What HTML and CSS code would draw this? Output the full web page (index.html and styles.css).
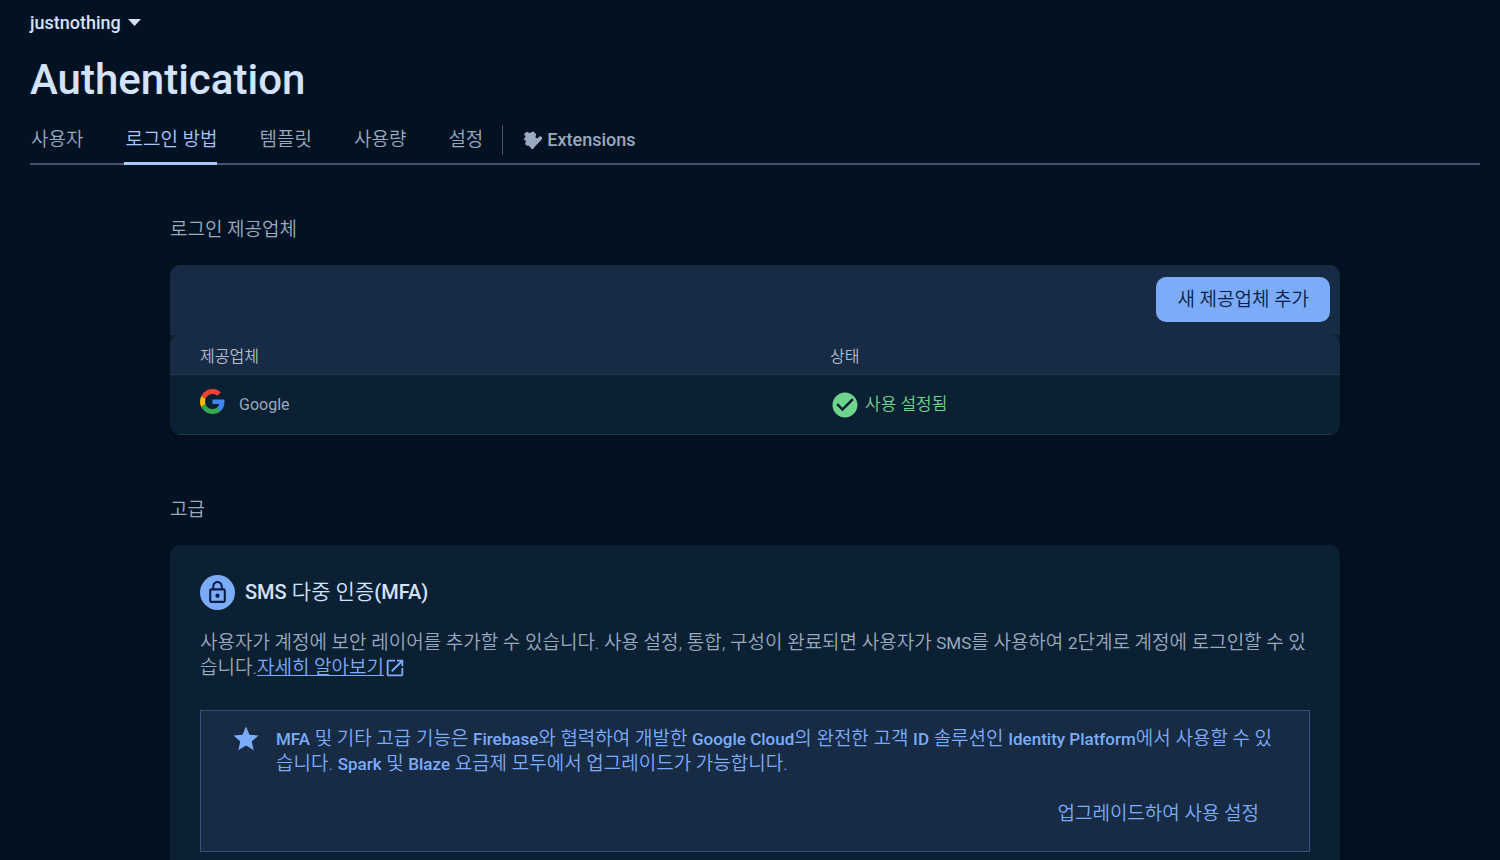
FILE: index.html
```html
<!DOCTYPE html>
<html lang="ko">
<head>
    <meta charset="UTF-8">
    <meta name="viewport" content="width=device-width, initial-scale=1.0">
    <title>Authentication</title>
    <link rel="stylesheet" href="styles.css">
</head>
<body>
    <header>
        <button type="button" class="project-button">
            justnothing
            <svg width="13" height="7" viewBox="0 0 13 7"><path d="M0 0h13L6.500 7z" fill="currentColor"/></svg>
        </button>
        <h1>Authentication</h1>
        <nav class="tabs">
            <a href="#users">사용자</a>
            <a href="#providers" class="active">로그인 방법</a>
            <a href="#templates">템플릿</a>
            <a href="#usage">사용량</a>
            <a href="#settings">설정</a>
            <a href="#extensions" class="extensions">
                <svg width="20" height="20" viewBox="0 0 20 20"><path d="M3 2.500Q4 1.200 5.200 2.300Q7 4 8.500 2Q9.800.8 11 2L12.800 4Q13.800 5 12.500 6.200Q12.300 8.500 14.500 8.300L16.800 6.200Q18 6 19 7.300Q19.600 8.500 18.700 9.500L11.500 17Q11 19 9.500 19T7.500 17.500L5.500 15.600Q3 16 2.300 14.300T3.200 11.500L1.200 9.700Q.6 8.700 1.800 7.800Q3.500 6.500 1.800 5.200Q.8 4.300 1.500 3.300Z" fill="currentColor"/></svg>
                Extensions
            </a>
        </nav>
    </header>

    <main>
        <h2>로그인 제공업체</h2>
        <section class="card">
            <div class="toolbar">
                <button type="button" class="add-button">새 제공업체 추가</button>
            </div>
            <table>
                <thead>
                    <tr>
                        <th>제공업체</th>
                        <th>상태</th>
                    </tr>
                </thead>
                <tbody>
                    <tr>
                        <td>
                            <div class="provider">
                                <svg width="25" height="25" viewBox="0 0 48 48">
                                    <path fill="#ea4335" d="M24 9.500c3.540 0 6.710 1.220 9.210 3.600l6.850-6.850C35.900 2.380 30.470 0 24 0 14.620 0 6.510 5.380 2.560 13.220l7.980 6.190C12.430 13.720 17.740 9.500 24 9.500z"/>
                                    <path fill="#4285f4" d="M46.980 24.550c0-1.570-.15-3.090-.38-4.550H24v9.020h12.940c-.58 2.960-2.260 5.480-4.780 7.180l7.730 6c4.510-4.180 7.090-10.360 7.090-17.650z"/>
                                    <path fill="#fbbc05" d="M10.530 28.590c-.48-1.450-.76-2.990-.76-4.590s.27-3.140.76-4.590l-7.980-6.190C.92 16.460 0 20.120 0 24c0 3.880.92 7.540 2.560 10.780l7.970-6.190z"/>
                                    <path fill="#34a853" d="M24 48c6.480 0 11.930-2.130 15.890-5.810l-7.730-6c-2.150 1.450-4.920 2.300-8.160 2.300-6.260 0-11.570-4.220-13.470-9.910l-7.980 6.190C6.510 42.620 14.620 48 24 48z"/>
                                </svg>
                                <span>Google</span>
                            </div>
                        </td>
                        <td>
                            <div class="status">
                                <svg width="30" height="30" viewBox="0 0 24 24"><path fill="currentColor" d="M12 2C6.480 2 2 6.480 2 12s4.480 10 10 10 10-4.480 10-10S17.520 2 12 2zm-2 15-5-5 1.410-1.410L10 14.170l7.590-7.590L19 8l-9 9z"/></svg>
                                <span>사용 설정됨</span>
                            </div>
                        </td>
                    </tr>
                </tbody>
            </table>
        </section>

        <h2>고급</h2>
        <section class="card mfa">
            <h3>
                <span class="lock">
                    <svg width="25" height="25" viewBox="0 0 24 24"><path fill="currentColor" d="M12 17c1.100 0 2-.9 2-2s-.9-2-2-2-2 .9-2 2 .9 2 2 2zm6-9h-1V6c0-2.760-2.240-5-5-5S7 3.240 7 6v2H6c-1.100 0-2 .9-2 2v10c0 1.100.9 2 2 2h12c1.100 0 2-.9 2-2V10c0-1.100-.9-2-2-2zM8.900 6c0-1.710 1.390-3.100 3.100-3.100s3.100 1.390 3.100 3.100v2H8.900V6zM18 20H6V10h12v10z"/></svg>
                </span>
                <span><b>SMS</b> 다중 인증<b>(MFA)</b></span>
            </h3>
            <p>사용자가 계정에 보안 레이어를 추가할 수 있습니다. 사용 설정, 통합, 구성이 완료되면 사용자가 <span class="en">SMS</span>를 사용하여 <span class="en">2</span>단계로 계정에 로그인할 수 있습니다.<a href="#learn-more">자세히 알아보기<svg width="22" height="22" viewBox="0 0 24 24"><path fill="currentColor" d="M19 19H5V5h7V3H5c-1.110 0-2 .9-2 2v14c0 1.100.89 2 2 2h14c1.100 0 2-.9 2-2v-7h-2v7zM14 3v2h3.590l-9.830 9.830 1.410 1.410L19 6.410V10h2V3h-7z"/></svg></a></p>
            <div class="upgrade">
                <svg width="30" height="30" viewBox="0 0 24 24"><path fill="currentColor" d="M12 17.270 18.180 21l-1.640-7.030L22 9.240l-7.190-.61L12 2 9.190 8.630 2 9.240l5.460 4.730L5.820 21z"/></svg>
                <div class="upgrade-text">
                    <p><b>MFA</b> 및 기타 고급 기능은 <b>Firebase</b>와 협력하여 개발한 <b>Google Cloud</b>의 완전한 고객 <b>ID</b> 솔루션인 <b>Identity Platform</b>에서 사용할 수 있습니다. <b>Spark</b> 및 <b>Blaze</b> 요금제 모두에서 업그레이드가 가능합니다.</p>
                    <button type="button">업그레이드하여 사용 설정</button>
                </div>
            </div>
        </section>
    </main>
</body>
</html>
```
FILE: styles.css
```css
* {
    box-sizing: border-box;
}

body {
    margin: 0;
    padding: 0 20px 0 30px;
    background-color: #021222;
    color: #99a9be;
    font-family: Roboto, "Noto Sans CJK KR", sans-serif;
    font-size: 19px;
    font-weight: 350;
    line-height: 25px;
}

h1,
h2,
h3,
p {
    margin: 0;
}

svg {
    display: block;
    flex: none;
}

button {
    border: none;
    background: none;
    font-family: inherit;
    font-size: 19px;
    font-weight: 350;
    line-height: 25px;
    cursor: pointer;
}

.project-button {
    display: flex;
    align-items: center;
    gap: 7px;
    padding: 10px 0;
    color: #d3e3fd;
    font-size: 18px;
    font-weight: 500;
}

h1 {
    padding: 10px 0;
    color: #d3e3fd;
    font-size: 42px;
    font-weight: 500;
    line-height: 50px;
}

.tabs {
    display: flex;
    gap: 41px;
    height: 50px;
    border-bottom: 2px solid #43536a;
}

.tabs a {
    height: 50px;
    padding: 12px 0 0 1px;
    color: #99a9be;
    text-decoration: none;
}

.tabs .active {
    border-bottom: 3px solid #a8c7fa;
    border-radius: 3px 3px 0 0;
    color: #a8c7fa;
}

.tabs .extensions {
    display: flex;
    align-items: center;
    gap: 4px;
    height: 30px;
    margin: 10px 0 0 -22px;
    padding: 0 0 1px 20px;
    border-left: 1px solid #43536a;
    font-size: 18px;
    font-weight: 500;
}

main {
    max-width: 1170px;
    margin: 0 auto;
}

h2 {
    padding: 52px 0 23px;
    font-size: 19px;
    font-weight: 350;
}

.card {
    margin-bottom: 10px;
    border-radius: 10px;
    background-color: #0c2034;
    box-shadow: 0 1px 3px rgba(0, 0, 0, 0.4);
    overflow: hidden;
}

.toolbar {
    display: flex;
    justify-content: flex-end;
    height: 70px;
    padding: 12px 10px;
    background-color: #172b45;
}

.add-button {
    height: 45px;
    padding: 0 21px;
    border-radius: 10px;
    background-color: #7cacf8;
    color: #041e49;
}

table {
    width: 100%;
    border-collapse: separate;
    border-spacing: 0;
    table-layout: fixed;
}

th,
td {
    padding: 0 0 0 30px;
    border-bottom: 1px solid #243750;
    text-align: left;
}

th {
    height: 40px;
    padding-top: 3px;
    background-color: #172b45;
    color: #b5bcc7;
    font-size: 16px;
    font-weight: 350;
}

th:first-child {
    width: 630px;
    border-top-left-radius: 10px;
}

th:last-child {
    border-top-right-radius: 10px;
}

td {
    height: 60px;
    font-size: 16px;
}

.provider {
    display: flex;
    align-items: center;
    gap: 14px;
    font-weight: 400;
}

.provider svg {
    margin-bottom: 6px;
}

.status {
    display: flex;
    align-items: center;
    gap: 5px;
    color: #6dd58c;
    font-size: 17px;
}

.mfa {
    padding: 30px;
}

b {
    font-weight: 500;
    line-height: 1;
}

h3 {
    display: flex;
    align-items: center;
    gap: 10px;
    margin-bottom: 20px;
    color: #d3e3fd;
    font-size: 21px;
    font-weight: 350;
}

h3 b {
    font-size: 20px;
}

.mfa .en {
    font-size: 17px;
    font-weight: 400;
    line-height: 1;
}

.mfa a {
    color: #7cacf8;
}

.mfa a svg {
    display: inline-block;
    vertical-align: -5px;
}

.lock {
    display: flex;
    align-items: center;
    justify-content: center;
    width: 35px;
    height: 35px;
    border-radius: 50%;
    background-color: #7cacf8;
    color: #041e49;
}

.upgrade {
    display: flex;
    gap: 15px;
    margin-top: 30px;
    padding: 15px 30px;
    border: 1px solid #34507f;
    background-color: #172b45;
    color: #7cacf8;
}

.upgrade-text {
    flex: 1;
}

.upgrade p b {
    font-size: 17px;
}

.upgrade > svg {
    margin-top: -2px;
}

.upgrade button {
    display: block;
    margin: 15px 0 0 auto;
    padding: 10px 20px;
    color: #7cacf8;
}
```
